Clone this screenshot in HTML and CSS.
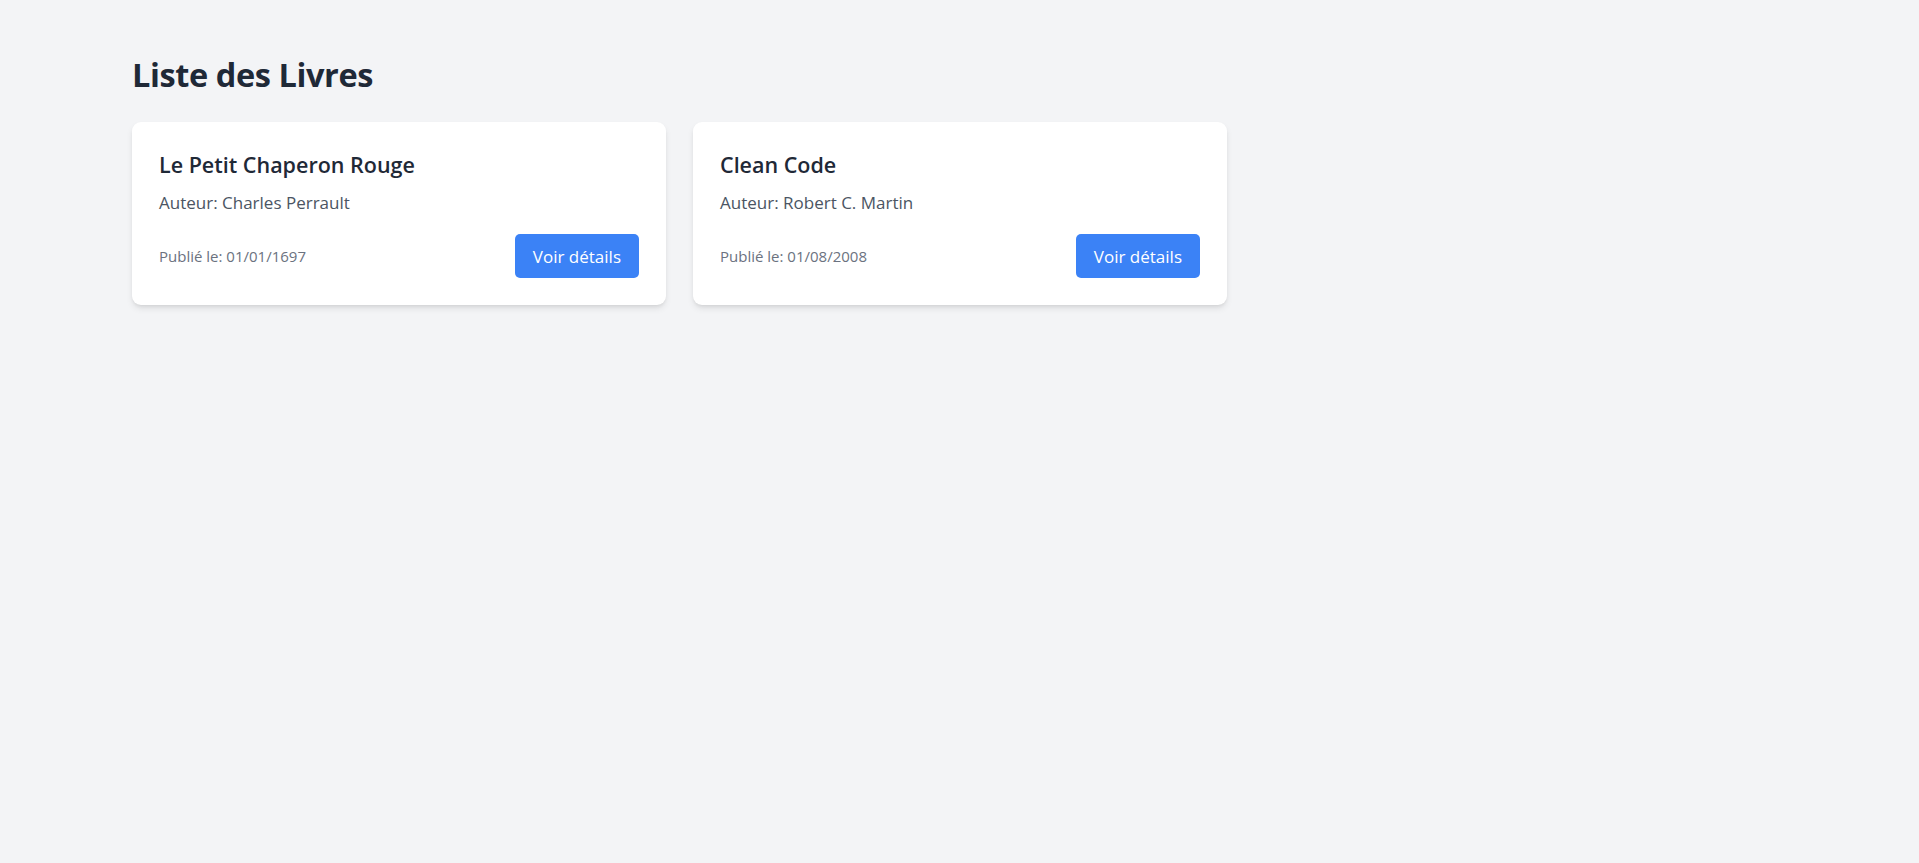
FILE: index.html
```html
<!DOCTYPE html>
<html lang="fr">
<head>
<meta charset="utf-8">
<title>Liste des Livres</title>
<link rel="stylesheet" href="styles.css">
</head>
<body>
<main class="page">
  <h1 class="page-title">Liste des Livres</h1>
  <div class="book-grid">
    <article class="book-card">
      <h2 class="book-title">Le Petit Chaperon Rouge</h2>
      <p class="book-author">Auteur: Charles Perrault</p>
      <div class="book-footer">
        <span class="book-date">Publié le: 01/01/1697</span>
        <button class="btn-details">Voir détails</button>
      </div>
    </article>
    <article class="book-card">
      <h2 class="book-title">Clean Code</h2>
      <p class="book-author">Auteur: Robert C. Martin</p>
      <div class="book-footer">
        <span class="book-date">Publié le: 01/08/2008</span>
        <button class="btn-details">Voir détails</button>
      </div>
    </article>
  </div>
</main>
</body>
</html>
```

FILE: styles.css
```css
* { box-sizing: border-box; }
html, body { margin: 0; padding: 0; }
body {
  background: #f3f4f6;
  font-family: "Open Sans", "Noto Sans", sans-serif;
  color: #1f2937;
  min-height: 100vh;
}
.page {
  padding: 53px 131px 40px 132px;
}
.page-title {
  margin: 0 0 25px 0;
  font-size: 32.5px;
  line-height: 44px;
  font-weight: 700;
  color: #1f2937;
  letter-spacing: -0.4px;
}
.book-grid {
  display: grid;
  grid-template-columns: repeat(3, 1fr);
  gap: 27px;
}
.book-card {
  background: #fff;
  border-radius: 9px;
  box-shadow: 0 4px 7px -1px rgba(0,0,0,0.10), 0 2px 4px -2px rgba(0,0,0,0.10);
  padding: 27px;
  display: flex;
  flex-direction: column;
}
.book-title {
  margin: 0 0 8px 0;
  font-size: 21.5px;
  line-height: 32px;
  font-weight: 600;
  color: #1f2937;
}
.book-author {
  margin: 0;
  font-size: 17px;
  line-height: 28px;
  color: #4b5563;
}
.book-footer {
  margin-top: 17px;
  display: flex;
  align-items: center;
  justify-content: space-between;
}
.book-date {
  font-size: 15px;
  color: #6b7280;
}
.btn-details {
  font-family: inherit;
  border: 0;
  background: #3b82f6;
  color: #fff;
  font-size: 17px;
  height: 44px;
  padding: 0 18px;
  border-radius: 5px;
  cursor: pointer;
}
```
